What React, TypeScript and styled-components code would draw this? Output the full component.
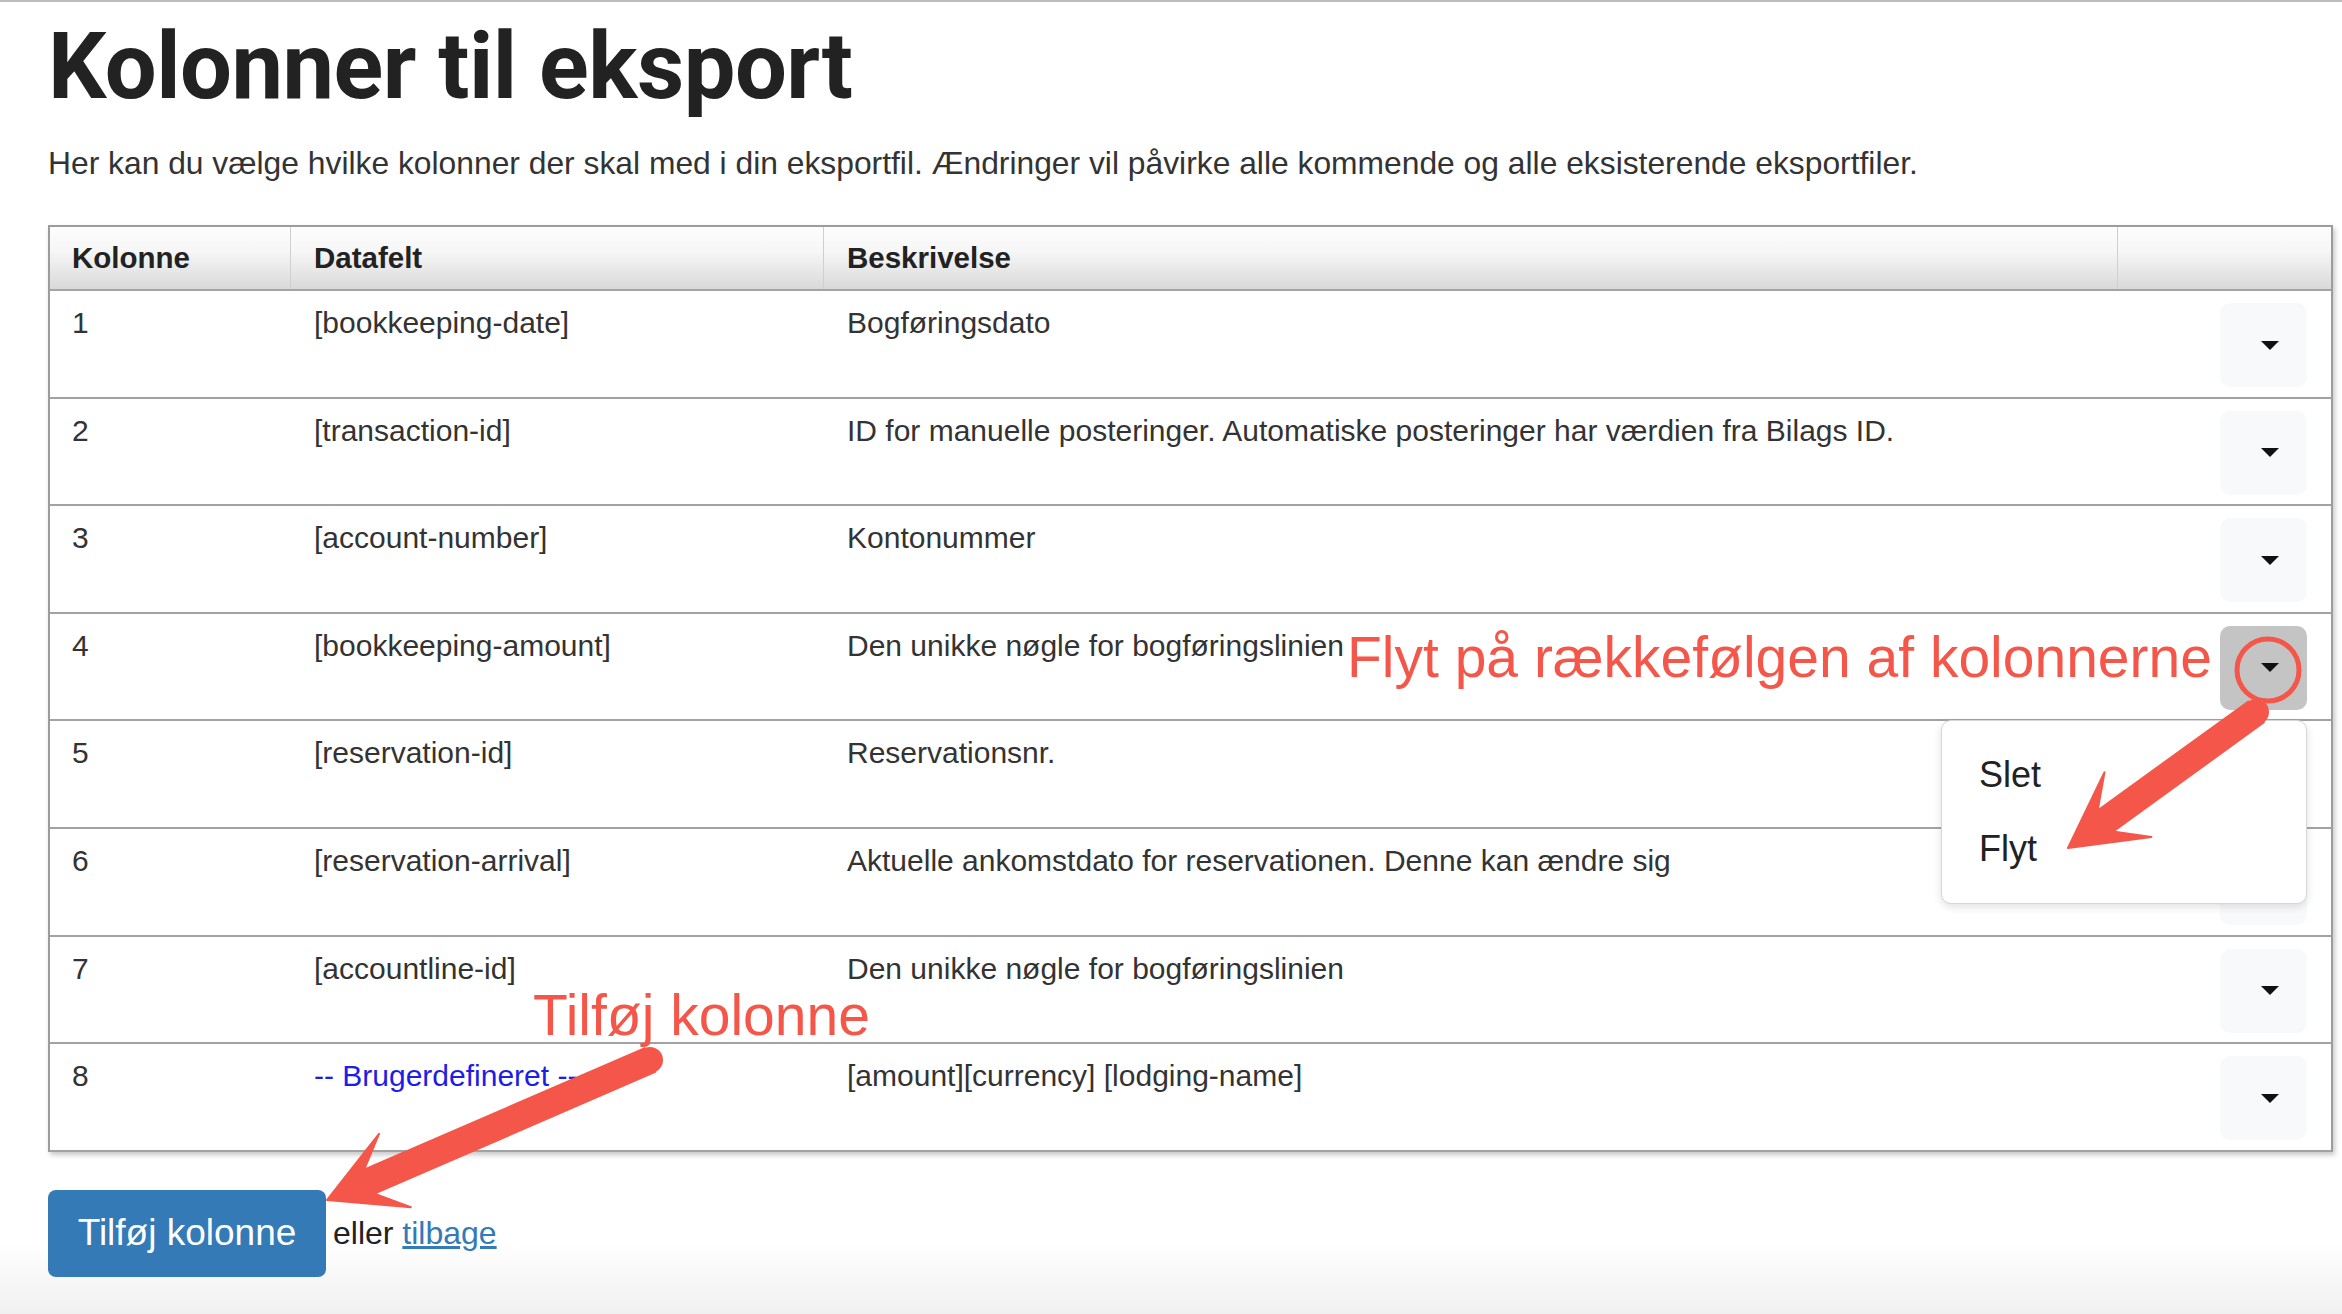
import React from 'react';
import styled, { createGlobalStyle } from 'styled-components';

const GlobalStyle = createGlobalStyle`
  html, body {
    margin: 0;
    padding: 0;
    background: #fff;
  }
  * {
    box-sizing: border-box;
  }
`;

// Page
const Page = styled.div`
  position: relative;
  min-height: 1314px;
  padding: 21px 0 0 48px;
  font-family: 'Liberation Sans', Arial, sans-serif;
  color: #333;
  background: linear-gradient(to bottom, #fff calc(100% - 70px), #f0f0f0 100%);
  box-shadow: inset 0 2px 0 #bdbdbd;
  overflow: hidden;
`;

const Title = styled.h1`
  margin: 0;
  font-family: Roboto, 'Liberation Sans', sans-serif;
  font-weight: 700;
  font-size: 92px;
  line-height: 92px;
  color: #222;
  letter-spacing: -0.5px;
`;

const Intro = styled.p`
  margin: 31px 0 0 0;
  font-size: 31.8px;
  line-height: 38px;
  color: #333;
`;

// Table
const Table = styled.div`
  margin-top: 43px;
  width: 2285px;
  border: 2px solid #9c9c9c;
  border-bottom: none;
  box-shadow: 2px 3px 5px rgba(0, 0, 0, 0.22);
  background: #fff;
`;

const Cols = `
  display: grid;
  grid-template-columns: 241px 533px 1294px 1fr;
`;

const HeadRow = styled.div`
  ${Cols}
  height: 64px;
  border-bottom: 2px solid #a4a4a4;
  background: linear-gradient(to bottom, #fdfdfd 0%, #f6f6f6 40%, #d9d9d9 100%);
`;

const HeadCell = styled.div<{ $first?: boolean; $last?: boolean }>`
  display: flex;
  align-items: center;
  padding-left: ${(p) => (p.$first ? 22 : 23)}px;
  font-size: 29.5px;
  font-weight: 700;
  color: #222;
  border-right: ${(p) => (p.$last ? 'none' : '1px solid #cfcfcf')};
`;

const Row = styled.div`
  ${Cols}
  height: 107.6px;
  border-bottom: 2px solid #a2a2a2;
`;

const Cell = styled.div<{ $custom?: boolean; $first?: boolean }>`
  padding: 14px 0 0 ${(p) => (p.$first ? 22 : 23)}px;
  font-size: 30px;
  line-height: 36px;
  color: ${(p) => (p.$custom ? '#1d1de6' : '#333')};
  white-space: nowrap;
`;

const ActionCell = styled.div`
  position: relative;
  display: flex;
  justify-content: flex-end;
  align-items: flex-start;
  padding: 12px 24px 0 0;
`;

const DropButton = styled.button<{ $active?: boolean }>`
  width: 87px;
  height: 84px;
  padding: 0 0 0 12px;
  border: none;
  border-radius: 10px;
  background: ${(p) => (p.$active ? '#c4c4c4' : '#f8f9fa')};
  display: flex;
  align-items: center;
  justify-content: center;
  cursor: pointer;
`;

const Caret = styled.span`
  width: 0;
  height: 0;
  border-left: 9px solid transparent;
  border-right: 9px solid transparent;
  border-top: 9px solid #111;
`;

const Menu = styled.div`
  position: absolute;
  top: 106px;
  right: 24px;
  width: 366px;
  height: 184px;
  padding: 17px 0 0 37px;
  background: #fff;
  border: 1px solid #d6d6d6;
  border-radius: 10px;
  box-shadow: 0 3px 8px rgba(0, 0, 0, 0.12);
  z-index: 2;
`;

const MenuItem = styled.div`
  font-size: 36px;
  line-height: 74px;
  color: #222;
  height: 74px;
`;

// Footer
const Footer = styled.div`
  display: flex;
  align-items: center;
  gap: 7px;
  margin-top: 38px;
`;

const AddButton = styled.button`
  width: 278px;
  height: 87px;
  border: none;
  border-radius: 8px;
  background: #337ab7;
  color: #fff;
  font-family: 'Liberation Sans', Arial, sans-serif;
  font-size: 37px;
  cursor: pointer;
`;

const Or = styled.span`
  font-size: 32px;
  color: #222;

  a {
    color: #337ab7;
    text-decoration: underline;
  }
`;

// Annotations lying over the screenshot
const Callout = styled.div<{ $top: number; $left: number }>`
  position: absolute;
  top: ${(p) => p.$top}px;
  left: ${(p) => p.$left}px;
  font-family: 'Liberation Sans', Arial, sans-serif;
  font-size: 57px;
  line-height: 57px;
  color: #f4574a;
  white-space: nowrap;
  z-index: 3;
`;

const Overlay = styled.svg`
  position: absolute;
  top: 0;
  left: 0;
  pointer-events: none;
  z-index: 4;
`;

const RED = '#f4574a';

type Pt = [number, number];

const arrowPoints = (tail: Pt, tip: Pt) => {
  const len = Math.hypot(tip[0] - tail[0], tip[1] - tail[1]);
  const d = [(tip[0] - tail[0]) / len, (tip[1] - tail[1]) / len];
  const n = [d[1], -d[0]];
  const at = (back: number, side: number): string =>
    `${tip[0] - d[0] * back + n[0] * side},${tip[1] - d[1] * back + n[1] * side}`;
  const tailAt = (side: number): string =>
    `${tail[0] + n[0] * side},${tail[1] + n[1] * side}`;
  return [
    at(0, 0),
    at(74, 40),
    at(46, 13),
    tailAt(13),
    tailAt(-13),
    at(46, -13),
    at(74, -40),
  ].join(' ');
};

const Arrow: React.FC<{ tail: Pt; tip: Pt }> = ({ tail, tip }) => (
  <g fill={RED}>
    <polygon points={arrowPoints(tail, tip)} strokeLinejoin='round' stroke={RED} strokeWidth={2} />
    <circle cx={tail[0]} cy={tail[1]} r={13} />
  </g>
);

const rows = [
  { n: 1, field: '[bookkeeping-date]', desc: 'Bogføringsdato' },
  {
    n: 2,
    field: '[transaction-id]',
    desc: 'ID for manuelle posteringer. Automatiske posteringer har værdien fra Bilags ID.',
  },
  { n: 3, field: '[account-number]', desc: 'Kontonummer' },
  { n: 4, field: '[bookkeeping-amount]', desc: 'Den unikke nøgle for bogføringslinien', open: true },
  { n: 5, field: '[reservation-id]', desc: 'Reservationsnr.' },
  {
    n: 6,
    field: '[reservation-arrival]',
    desc: 'Aktuelle ankomstdato for reservationen. Denne kan ændre sig',
  },
  { n: 7, field: '[accountline-id]', desc: 'Den unikke nøgle for bogføringslinien' },
  { n: 8, field: '-- Brugerdefineret --', desc: '[amount][currency] [lodging-name]', custom: true },
];

const App: React.FC = () => {
  return (
    <>
      <GlobalStyle />
      <Page>
        <Title>Kolonner til eksport</Title>
        <Intro>
          Her kan du vælge hvilke kolonner der skal med i din eksportfil. Ændringer vil påvirke alle
          kommende og alle eksisterende eksportfiler.
        </Intro>

        <Table>
          <HeadRow>
            <HeadCell $first>Kolonne</HeadCell>
            <HeadCell>Datafelt</HeadCell>
            <HeadCell>Beskrivelse</HeadCell>
            <HeadCell $last />
          </HeadRow>
          {rows.map((r) => (
            <Row key={r.n}>
              <Cell $first>{r.n}</Cell>
              <Cell $custom={r.custom}>{r.field}</Cell>
              <Cell>{r.desc}</Cell>
              <ActionCell>
                <DropButton $active={r.open}>
                  <Caret />
                </DropButton>
                {r.open && (
                  <Menu>
                    <MenuItem>Slet</MenuItem>
                    <MenuItem>Flyt</MenuItem>
                  </Menu>
                )}
              </ActionCell>
            </Row>
          ))}
        </Table>

        <Footer>
          <AddButton>Tilføj kolonne</AddButton>
          <Or>
            eller <a href='#'>tilbage</a>
          </Or>
        </Footer>

        <Callout $top={629} $left={1347}>
          Flyt på rækkefølgen af kolonnerne
        </Callout>
        <Callout $top={987} $left={533}>
          Tilføj kolonne
        </Callout>

        <Overlay width={2342} height={1314} viewBox='0 0 2342 1314'>
          <Arrow tail={[2256, 712]} tip={[2068, 848]} />
          <circle cx={2268} cy={670} r={31} fill='none' stroke={RED} strokeWidth={5} />
          <Arrow tail={[650, 1060]} tip={[327, 1200]} />
        </Overlay>
      </Page>
    </>
  );
};

export default App;
